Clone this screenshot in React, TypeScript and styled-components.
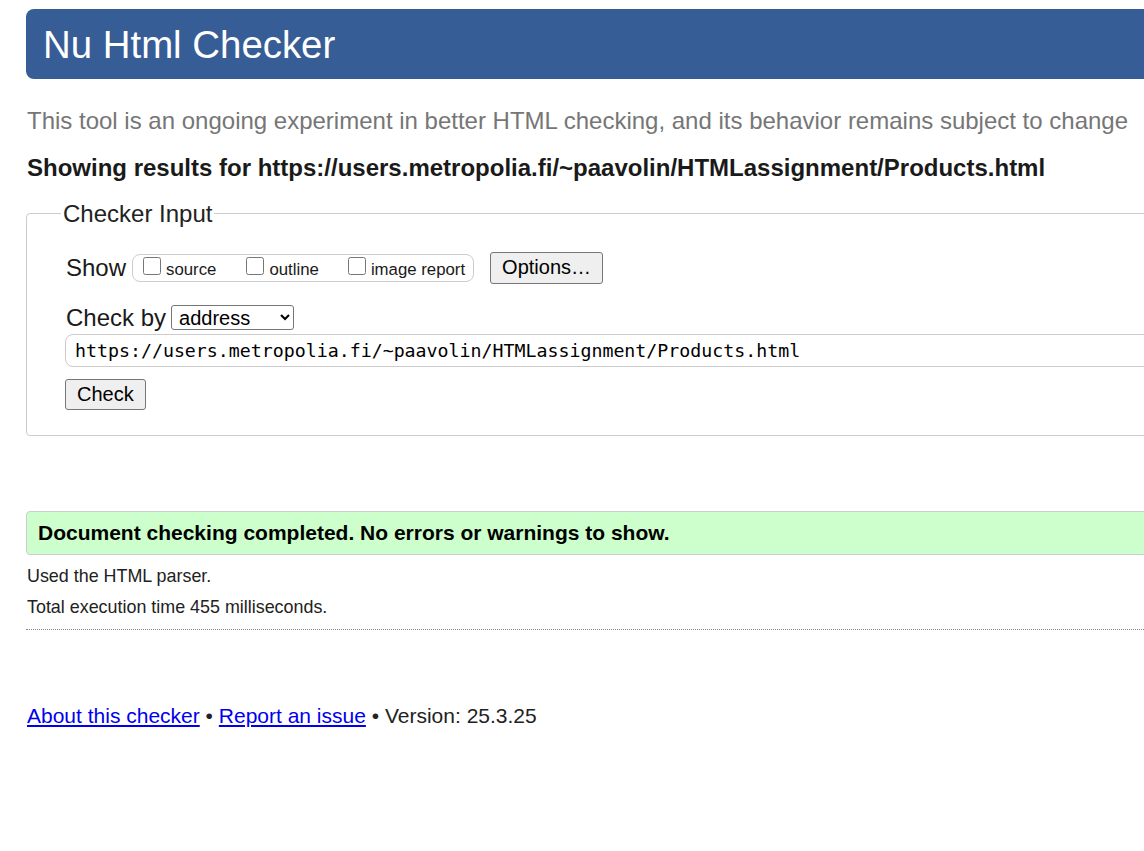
import styled, { createGlobalStyle } from 'styled-components';

const GlobalStyle = createGlobalStyle`
  html, body {
    margin: 0;
    padding: 0;
    background: #fff;
    overflow: hidden;
  }
  body {
    font-family: "Liberation Sans", Arial, sans-serif;
    color: #222;
  }
`;

const Page = styled.div`
  width: 1300px;
  padding: 9px 0 40px 26px;
`;

const Header = styled.header`
  height: 70px;
  box-sizing: border-box;
  background: #365d95;
  border-radius: 8px 0 0 8px;
  display: flex;
  align-items: center;
  padding: 2px 0 0 17px;
`;

const Title = styled.h1`
  margin: 0;
  font-size: 38.4px;
  font-weight: normal;
  color: #fff;
  line-height: 1;
`;

const Lead = styled.p`
  margin: 28px 0 0 1px;
  font-size: 24px;
  line-height: 27.6px;
  color: #767676;
  white-space: nowrap;
`;

const ResultsFor = styled.p`
  margin: 19px 0 0 1px;
  font-size: 24px;
  line-height: 27.6px;
  font-weight: bold;
  color: #1a1a1a;
  white-space: nowrap;
`;

const Fieldset = styled.fieldset`
  margin: 19px 0 0 0;
  padding: 0 0 25px 38px;
  border: 1px solid #ccc;
  border-radius: 4px 0 0 4px;
`;

const Legend = styled.legend`
  margin-left: -4px;
  padding: 0 2px;
  font-size: 24px;
  line-height: 27.6px;
  color: #222;
`;

const Row = styled.div<{ $top: number }>`
  display: flex;
  align-items: center;
  margin-top: ${({ $top }) => $top}px;
`;

const Label = styled.span`
  margin-left: 1px;
  font-size: 24px;
  line-height: 27.6px;
  color: #1a1a1a;
`;

const OptionGroup = styled.div`
  display: flex;
  align-items: center;
  height: 26px;
  margin-left: 6px;
  padding: 0 8px 0 10px;
  border: 1px solid #ccc;
  border-radius: 8px;
`;

const Option = styled.label<{ $gap?: number }>`
  display: block;
  margin-left: ${({ $gap }) => $gap ?? 0}px;
  font-size: 16.8px;
  line-height: 19px;
  color: #1a1a1a;
  white-space: nowrap;
`;

const Checkbox = styled.input.attrs({ type: 'checkbox' })`
  width: 18px;
  height: 18px;
  margin: 0 5px 1px 0;
`;

const Button = styled.button`
  font-family: "Liberation Sans", Arial, sans-serif;
  font-size: 20px;
  color: #000;
  background: #efefef;
  border: 1px solid #767676;
  border-radius: 3px;
  padding: 0 11px;
`;

const OptionsButton = styled(Button)`
  height: 32px;
  margin-left: 16px;
`;

const CheckButton = styled(Button)`
  display: block;
  height: 31px;
  margin-top: 12px;
`;

const Select = styled.select`
  width: 123px;
  height: 25px;
  margin-left: 5px;
  font-family: "Liberation Sans", Arial, sans-serif;
  font-size: 20px;
  color: #000;
  background: #fff;
  border: 1px solid #767676;
  border-radius: 3px;
  padding: 0 0 0 3px;
`;

const UrlInput = styled.input`
  display: block;
  box-sizing: border-box;
  width: 1200px;
  height: 33px;
  margin-top: 3px;
  padding: 0 9px;
  font-family: "DejaVu Sans Mono", "Liberation Mono", monospace;
  font-size: 18.25px;
  color: #000;
  border: 1px solid #ccc;
  border-radius: 8px 0 0 8px;
  outline: none;
`;

const Success = styled.div`
  margin-top: 75px;
  height: 42px;
  display: flex;
  align-items: center;
  padding-left: 11px;
  background: #ccffcc;
  border: 1px solid #ccc;
  border-radius: 4px 0 0 4px;
  font-size: 21px;
  font-weight: bold;
  color: #000;
`;

const Detail = styled.p`
  margin: 11px 0 0 1px;
  font-size: 17.9px;
  line-height: 20px;
  color: #222;
`;

const Divider = styled.hr`
  margin: 12px 0 0 0;
  border: none;
  border-top: 1px dotted #888;
`;

const Footer = styled.p`
  margin: 74px 0 0 1px;
  font-size: 21px;
  line-height: 24px;
  color: #222;
`;

const Link = styled.a`
  color: #0000ee;
  text-decoration: underline;
`;

const url = 'https://users.metropolia.fi/~paavolin/HTMLassignment/Products.html';

export default function App() {
  return (
    <>
      <GlobalStyle />
      <Page>
        <Header>
          <Title>Nu Html Checker</Title>
        </Header>
        <Lead>
          This tool is an ongoing experiment in better HTML checking, and its behavior remains subject to change
        </Lead>
        <ResultsFor>Showing results for {url}</ResultsFor>

        <Fieldset>
          <Legend>Checker Input</Legend>
          <Row $top={24}>
            <Label>Show</Label>
            <OptionGroup>
              <Option>
                <Checkbox />source
              </Option>
              <Option $gap={30}>
                <Checkbox />outline
              </Option>
              <Option $gap={29}>
                <Checkbox />image report
              </Option>
            </OptionGroup>
            <OptionsButton type="button">Options…</OptionsButton>
          </Row>
          <Row $top={20}>
            <Label>Check by</Label>
            <Select defaultValue="address">
              <option value="address">address</option>
              <option value="file">file upload</option>
              <option value="text">text input</option>
            </Select>
          </Row>
          <UrlInput type="url" defaultValue={url} />
          <CheckButton type="submit">Check</CheckButton>
        </Fieldset>

        <Success>Document checking completed. No errors or warnings to show.</Success>
        <Detail>Used the HTML parser.</Detail>
        <Detail>Total execution time 455 milliseconds.</Detail>
        <Divider />
        <Footer>
          <Link href="#about">About this checker</Link> • <Link href="#issue">Report an issue</Link> • Version: 25.3.25
        </Footer>
      </Page>
    </>
  );
}
